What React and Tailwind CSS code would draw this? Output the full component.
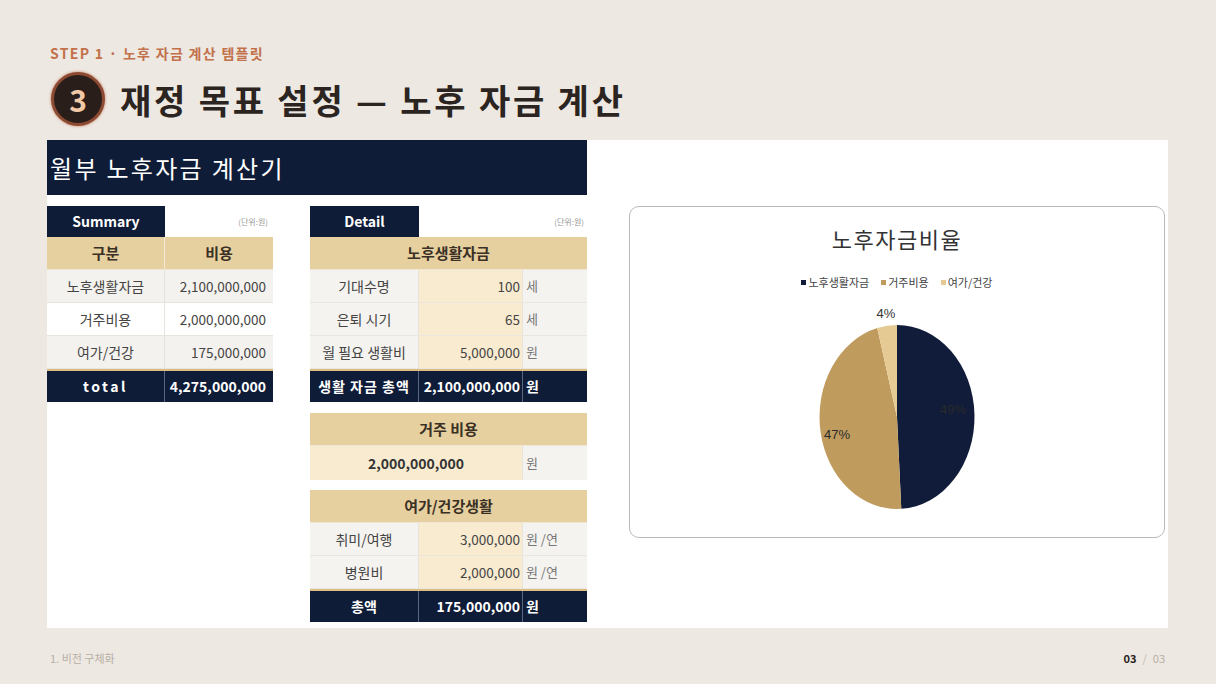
import React from "react";

const NAVY = "#0f1c38";

function pt(cx, cy, rx, ry, deg) {
  const r = (deg * Math.PI) / 180;
  return [cx + rx * Math.sin(r), cy - ry * Math.cos(r)];
}
function slice(cx, cy, rx, ry, a0, a1) {
  const [x0, y0] = pt(cx, cy, rx, ry, a0);
  const [x1, y1] = pt(cx, cy, rx, ry, a1);
  const large = a1 - a0 > 180 ? 1 : 0;
  return `M${cx} ${cy} L${x0.toFixed(2)} ${y0.toFixed(2)} A${rx} ${ry} 0 ${large} 1 ${x1.toFixed(2)} ${y1.toFixed(2)} Z`;
}

function Pie() {
  const cx = 268, cy = 115, rx = 77.5, ry = 92;
  const a1 = 0.4912 * 360;
  const a2 = (0.4912 + 0.4678) * 360;
  return (
    <svg width="536" height="215" viewBox="0 0 536 215" className="block">
      <path d={slice(cx, cy, rx, ry, 0, a1)} fill="#101c3a" />
      <path d={slice(cx, cy, rx, ry, a1, a2)} fill="#bf9b5e" />
      <path d={slice(cx, cy, rx, ry, a2, 360)} fill="#e5cb93" />
      <text x="257" y="16" textAnchor="middle" fontSize="13" fill="#333" fontFamily="'Liberation Sans', Arial, sans-serif">4%</text>
      <text x="208" y="137" textAnchor="middle" fontSize="13" fill="#2a2a2a" fontFamily="'Liberation Sans', Arial, sans-serif">47%</text>
      <text x="324" y="112" textAnchor="middle" fontSize="13" fill="#2a2a2a" fontFamily="'Liberation Sans', Arial, sans-serif">49%</text>
    </svg>
  );
}

function SumRow({ label, value, bg }) {
  return (
    <div className={`flex h-[33px] border-b border-[#e7e3dd] ${bg}`}>
      <div className="w-[118px] flex items-center justify-center border-r border-[#e7e3dd] text-[14px] text-[#444]">{label}</div>
      <div className="flex-1 flex items-center justify-end pr-[7px] text-[13.5px] text-[#444]">{value}</div>
    </div>
  );
}

function DetRow({ label, value, unit }) {
  return (
    <div className="flex h-[33px] border-b border-[#ebe6df]">
      <div className="w-[109px] bg-[#f5f3ef] flex items-center justify-center border-r border-[#e7e3dd] text-[14px] text-[#444]">{label}</div>
      <div className="w-[103px] bg-[#f8ebd0] flex items-center justify-end pr-[2px] text-[13.5px] text-[#444]">{value}</div>
      <div className="flex-1 bg-[#f5f3ef] flex items-center pl-[3px] border-l border-[#e7e3dd] text-[13px] text-[#777]">{unit}</div>
    </div>
  );
}

function DetTotal({ label, value, tracking }) {
  return (
    <div className="flex h-[33px] border-t-2 border-[#dcbd82]" style={{ backgroundColor: NAVY }}>
      <div className={`w-[109px] flex items-center justify-center border-r border-[#5a6680] text-[14px] font-bold text-white ${tracking}`}>{label}</div>
      <div className="w-[103px] flex items-center justify-end pr-[2px] text-[14px] font-bold text-white">{value}</div>
      <div className="flex-1 flex items-center pl-[3px] border-l border-[#5a6680] text-[14px] font-bold text-white">원</div>
    </div>
  );
}

function TanHeader({ children }) {
  return (
    <div className="h-[33px] bg-[#e7d09f] flex items-center justify-center text-[15px] font-bold text-[#3a3025] border-b border-[#efe6d4]">{children}</div>
  );
}

export default function App() {
  return (
    <div
      className="w-[1216px] h-[684px] bg-[#ede8e2] flex flex-col pl-[47px] pt-[44px]"
      style={{ fontFamily: "'Noto Sans CJK KR', 'Noto Sans', sans-serif" }}
    >
      <div className="pl-[3px] h-[18px] leading-[18px] text-[14px] font-bold text-[#c2714a] tracking-[1.3px]">STEP 1 · 노후 자금 계산 템플릿</div>
      <div className="flex items-center mt-[10px] h-[54px]">
        <div className="ml-[4px] w-[54px] h-[54px] rounded-full bg-[#2a1e1a] border-[3px] border-[#8d4a33] flex items-center justify-center text-[30px] font-bold text-[#f2c9a6] shadow-[0_0_3px_#c27a5a]">3</div>
        <div className="ml-[15px] text-[34px] font-bold text-[#2b2421] tracking-[2.8px]">재정 목표 설정 — 노후 자금 계산</div>
      </div>

      <div className="mt-[14px] w-[1121px] h-[488px] bg-white flex">
        <div className="w-[540px] flex flex-col">
          <div className="h-[55px] flex items-center pl-[3px] text-[24px] text-white tracking-[2.3px]" style={{ backgroundColor: NAVY }}>월부 노후자금 계산기</div>
          <div className="flex mt-[11px]">
            {/* Summary */}
            <div className="w-[226px] flex flex-col">
              <div className="flex h-[31px]">
                <div className="w-[118px] flex items-center justify-center text-[14px] font-bold text-white" style={{ backgroundColor: NAVY }}>Summary</div>
                <div className="flex-1 flex items-center justify-end pr-[5px] text-[8px] text-[#999]">(단위:원)</div>
              </div>
              <div className="flex h-[33px] bg-[#e7d09f] border-b border-[#efe6d4]">
                <div className="w-[118px] flex items-center justify-center border-r border-[#f3ead8] text-[15px] font-bold text-[#3a3025]">구분</div>
                <div className="flex-1 flex items-center justify-center text-[15px] font-bold text-[#3a3025]">비용</div>
              </div>
              <SumRow label="노후생활자금" value="2,100,000,000" bg="bg-[#f4f2ee]" />
              <SumRow label="거주비용" value="2,000,000,000" bg="bg-white" />
              <SumRow label="여가/건강" value="175,000,000" bg="bg-[#f4f2ee]" />
              <div className="flex h-[33px] border-t-2 border-[#dcbd82]" style={{ backgroundColor: NAVY }}>
                <div className="w-[118px] flex items-center justify-center border-r border-[#5a6680] text-[14px] font-bold text-white tracking-[2.5px]">total</div>
                <div className="flex-1 flex items-center justify-end pr-[7px] text-[14px] font-bold text-white">4,275,000,000</div>
              </div>
            </div>

            {/* Detail */}
            <div className="ml-[37px] w-[277px] flex flex-col">
              <div className="flex h-[31px]">
                <div className="w-[109px] flex items-center justify-center text-[14px] font-bold text-white" style={{ backgroundColor: NAVY }}>Detail</div>
                <div className="flex-1 flex items-center justify-end pr-[3px] text-[8px] text-[#999]">(단위:원)</div>
              </div>
              <TanHeader>노후생활자금</TanHeader>
              <DetRow label="기대수명" value="100" unit="세" />
              <DetRow label="은퇴 시기" value="65" unit="세" />
              <DetRow label="월 필요 생활비" value="5,000,000" unit="원" />
              <DetTotal label="생활 자금 총액" value="2,100,000,000" tracking="tracking-[1px]" />

              <div className="mt-[11px]">
                <TanHeader>거주 비용</TanHeader>
                <div className="flex h-[34px]">
                  <div className="w-[212px] bg-[#f8ebd0] flex items-center justify-center text-[14px] font-bold text-[#333]">2,000,000,000</div>
                  <div className="flex-1 bg-[#f5f3ef] flex items-center pl-[3px] border-l border-[#e7e3dd] text-[13px] text-[#777]">원</div>
                </div>
              </div>

              <div className="mt-[10px]">
                <TanHeader>여가/건강생활</TanHeader>
                <DetRow label="취미/여행" value="3,000,000" unit="원 /연" />
                <DetRow label="병원비" value="2,000,000" unit="원 /연" />
                <DetTotal label="총액" value="175,000,000" tracking="" />
              </div>
            </div>
          </div>
        </div>

        {/* Chart */}
        <div className="ml-[42px] mt-[66px] w-[536px] h-[332px] border border-[#b9b9b9] rounded-[10px] flex flex-col items-center">
          <div className="mt-[16px] h-[30px] leading-[30px] text-[22px] text-[#333] tracking-[1.5px]">노후자금비율</div>
          <div className="mt-[21px] flex items-center gap-[12px] text-[11px] text-[#444] h-[16px]">
            <div className="flex items-center gap-[2px]"><span className="inline-block w-[5px] h-[5px] bg-[#101c3a]"></span>노후생활자금</div>
            <div className="flex items-center gap-[2px]"><span className="inline-block w-[5px] h-[5px] bg-[#bf9b5e]"></span>거주비용</div>
            <div className="flex items-center gap-[2px]"><span className="inline-block w-[5px] h-[5px] bg-[#e5cb93]"></span>여가/건강</div>
          </div>
          <div className="mt-[12px]">
            <Pie />
          </div>
        </div>
      </div>

      <div className="w-[1121px] flex items-center justify-between mt-[22px] pl-[3px] pr-[3px] text-[11px]">
        <div className="text-[#b8afa6]">1. 비전 구체화</div>
        <div className="flex items-center gap-[6px]">
          <span className="font-bold text-[#2b2421]">03</span>
          <span className="text-[#c2bab2]">/</span>
          <span className="text-[#b8afa6]">03</span>
        </div>
      </div>
    </div>
  );
}
